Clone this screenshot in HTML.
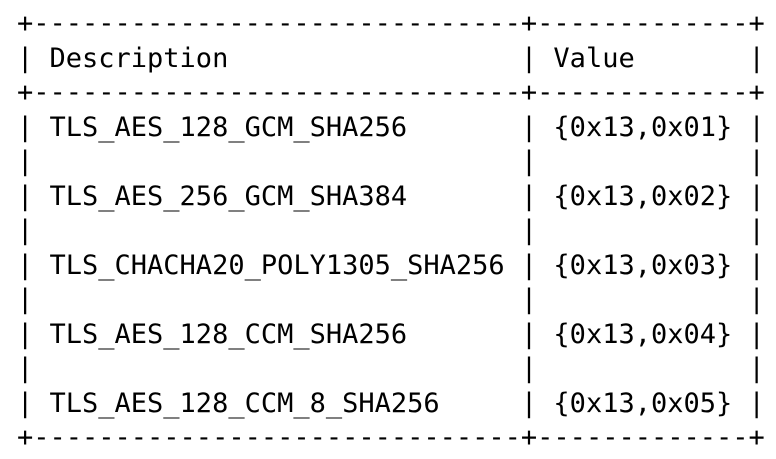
<!DOCTYPE html>
<html><head><style>
html,body{margin:0;padding:0;background:#fff;width:776px;height:459px;overflow:hidden}
pre{position:absolute;left:17px;top:7px;margin:0;font-family:"DejaVu Sans Mono","Liberation Mono",monospace;font-size:27px;line-height:34.5px;color:#000}
</style></head><body><pre>+------------------------------+-------------+
| Description                  | Value       |
+------------------------------+-------------+
| TLS_AES_128_GCM_SHA256       | {0x13,0x01} |
|                              |             |
| TLS_AES_256_GCM_SHA384       | {0x13,0x02} |
|                              |             |
| TLS_CHACHA20_POLY1305_SHA256 | {0x13,0x03} |
|                              |             |
| TLS_AES_128_CCM_SHA256       | {0x13,0x04} |
|                              |             |
| TLS_AES_128_CCM_8_SHA256     | {0x13,0x05} |
+------------------------------+-------------+</pre></body></html>
